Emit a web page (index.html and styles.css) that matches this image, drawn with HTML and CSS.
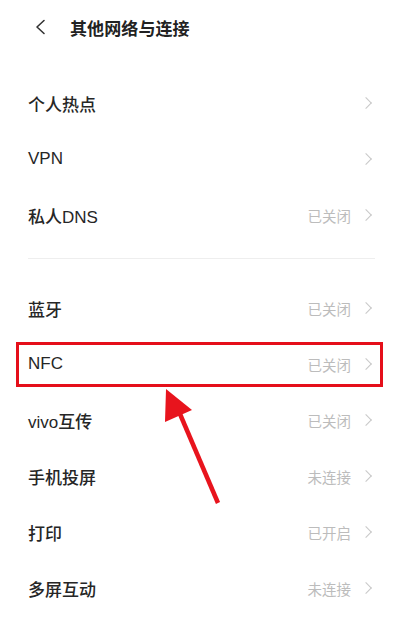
FILE: index.html
```html
<!DOCTYPE html>
<html lang="zh-CN">
<head>
<meta charset="utf-8">
<title>其他网络与连接</title>
<link rel="stylesheet" href="styles.css">
</head>
<body>
<div class="page">
  <header class="topbar">
    <svg class="back" width="12" height="16" viewBox="0 0 12 16"><path d="M10 1.5 L3 8 L10 14.5" fill="none" stroke="#333" stroke-width="1.6" stroke-linecap="round" stroke-linejoin="round"/></svg>
    <h1 class="title">其他网络与连接</h1>
  </header>

  <section class="group group-first">
    <div class="row"><span class="label">个人热点</span><span class="meta"><i class="chev"></i></span></div>
    <div class="row"><span class="label">VPN</span><span class="meta"><i class="chev"></i></span></div>
    <div class="row"><span class="label">私人DNS</span><span class="meta"><span class="state">已关闭</span><i class="chev"></i></span></div>
  </section>

  <div class="divider"></div>

  <section class="group">
    <div class="row"><span class="label">蓝牙</span><span class="meta"><span class="state">已关闭</span><i class="chev"></i></span></div>
    <div class="row row-marked"><span class="label">NFC</span><span class="meta"><span class="state">已关闭</span><i class="chev"></i></span><span class="mark-box"></span></div>
    <div class="row"><span class="label">vivo互传</span><span class="meta"><span class="state">已关闭</span><i class="chev"></i></span></div>
    <div class="row"><span class="label">手机投屏</span><span class="meta"><span class="state">未连接</span><i class="chev"></i></span></div>
    <div class="row"><span class="label">打印</span><span class="meta"><span class="state">已开启</span><i class="chev"></i></span></div>
    <div class="row"><span class="label">多屏互动</span><span class="meta"><span class="state">未连接</span><i class="chev"></i></span></div>
  </section>

  <svg class="pointer" width="403" height="627" viewBox="0 0 403 627">
    <line x1="180" y1="414" x2="218" y2="503" stroke="#e8141d" stroke-width="4.5"/>
    <polygon points="166,389 165,422 192,410" fill="#e8141d"/>
  </svg>
</div>
</body>
</html>
```

FILE: styles.css
```css
* { box-sizing: border-box; }

html, body {
  margin: 0;
  padding: 0;
  background: #fff;
}

.page {
  position: relative;
  width: 403px;
  height: 627px;
  overflow: hidden;
  font-family: "Liberation Sans", "Noto Sans CJK SC", sans-serif;
  color: #333;
}

.topbar {
  height: 54px;
  display: flex;
  align-items: center;
  padding-left: 34px;
  gap: 24px;
}

.back { display: block; }

.title {
  margin: 0;
  font-size: 17px;
  font-weight: 700;
  color: #222;
  letter-spacing: 0.1px;
}

.group-first { margin-top: 21px; }

.row {
  position: relative;
  height: 56px;
  display: flex;
  align-items: center;
  justify-content: space-between;
  padding: 0 31px 0 28px;
}

.label {
  font-size: 17px;
  font-weight: 500;
  color: #262626;
}

.meta {
  display: flex;
  align-items: center;
  gap: 11px;
}

.state {
  font-size: 14.5px;
  color: #bcbcbc;
}

.chev {
  display: block;
  width: 8px;
  height: 8px;
  border-top: 1.3px solid #c8c8c8;
  border-right: 1.3px solid #c8c8c8;
  transform: rotate(45deg) scale(1.05, 1.05);
  margin-right: 2px;
}

.divider {
  height: 1px;
  background: #eeeeee;
  margin: 15px 28px 21px 28px;
}

.mark-box {
  position: absolute;
  left: 16px;
  top: 6px;
  width: 367px;
  height: 45px;
  border: 3px solid #e50f1a;
  pointer-events: none;
}

.pointer {
  position: absolute;
  left: 0;
  top: 0;
  pointer-events: none;
}
```
